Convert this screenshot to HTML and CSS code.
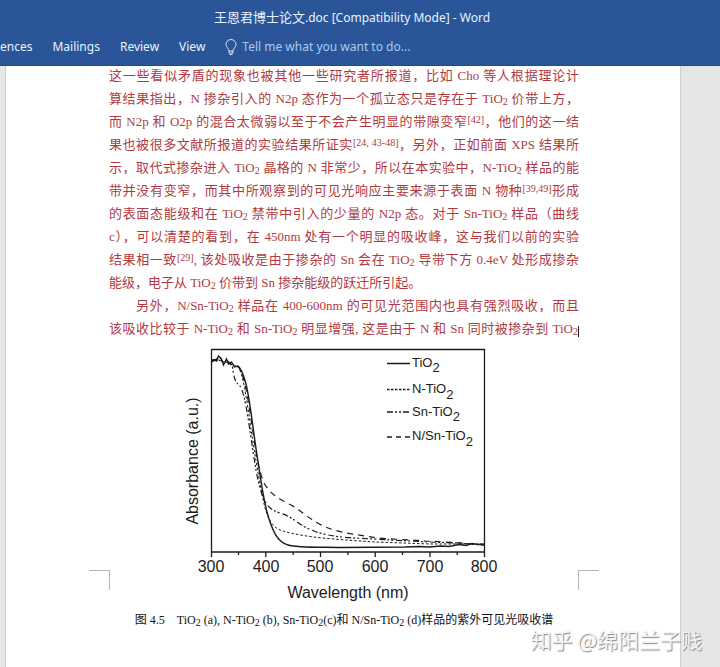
FILE: index.html
```html
<!DOCTYPE html>
<html lang="zh-CN">
<head>
<meta charset="utf-8">
<title>王恩君博士论文.doc [Compatibility Mode] - Word</title>
<link rel="stylesheet" href="styles.css">
</head>
<body>
<header class="ribbon">
  <div class="title"><span class="title-name">王恩君博士论文</span>.doc [Compatibility Mode] - Word</div>
  <nav class="tabs">
    <a class="tab" href="#references">ences</a>
    <a class="tab" href="#mailings">Mailings</a>
    <a class="tab" href="#review">Review</a>
    <a class="tab" href="#view">View</a>
    <button class="tell" type="button">
      <svg class="bulb" width="12" height="17" viewBox="0 0 12 17" fill="none" stroke="currentColor" aria-hidden="true"><path d="M4 12C4 9.500 1 8.500 1 5.500a5 5 0 0 1 10 0C11 8.500 8 9.500 8 12ZM4 12v2h4v-2M4.500 15.500h3"/></svg>
      <span>Tell me what you want to do...</span>
    </button>
  </nav>
</header>
<main class="workspace">
  <article class="page">
    <div class="body-text">
      <p class="line">这一些看似矛盾的现象也被其他一些研究者所报道，比如 Cho 等人根据理论计</p>
      <p class="line">算结果指出，N 掺杂引入的 N2p 态作为一个孤立态只是存在于 TiO<sub>2</sub> 价带上方，</p>
      <p class="line">而 N2p 和 O2p 的混合太微弱以至于不会产生明显的带隙变窄<sup>[42]</sup>，他们的这一结</p>
      <p class="line">果也被很多文献所报道的实验结果所证实<sup>[24, 43-48]</sup>，另外，正如前面 XPS 结果所</p>
      <p class="line">示，取代式掺杂进入 TiO<sub>2</sub> 晶格的 N 非常少，所以在本实验中，N-TiO<sub>2</sub> 样品的能</p>
      <p class="line">带并没有变窄，而其中所观察到的可见光响应主要来源于表面 N 物种<sup>[39,49]</sup>形成</p>
      <p class="line">的表面态能级和在 TiO<sub>2</sub> 禁带中引入的少量的 N2p 态。对于 Sn-TiO<sub>2</sub> 样品（曲线</p>
      <p class="line">c），可以清楚的看到，在 450nm 处有一个明显的吸收峰，这与我们以前的实验</p>
      <p class="line">结果相一致<sup>[29]</sup>, 该处吸收是由于掺杂的 Sn 会在 TiO<sub>2</sub> 导带下方 0.4eV 处形成掺杂</p>
      <p class="line line-end">能级，电子从 TiO<sub>2</sub> 价带到 Sn 掺杂能级的跃迁所引起。</p>
      <p class="line line-indent">另外，N/Sn-TiO<sub>2</sub> 样品在 400-600nm 的可见光范围内也具有强烈吸收，而且</p>
      <p class="line">该吸收比较于 N-TiO<sub>2</sub> 和 Sn-TiO<sub>2</sub> 明显增强, 这是由于 N 和 Sn 同时被掺杂到 TiO<sub class="caret">2</sub></p>
    </div>
    <figure class="figure">
      <div class="figure-row">
        <span class="corner corner-left"></span>
        <svg class="chart" width="320" height="264" viewBox="184 342 320 264" role="img" aria-label="Absorbance (a.u.) / Wavelength (nm)">
          <g fill="none" stroke="#1c1c1c">
            <path d="M211.500 349.500H484.500V552M211.500 349V557M211 552H485" stroke-width="1.300"/>
            <path d="M265.800 552v5M320.500 552v5M375.200 552v5M430 552v5M484.500 552v5M238.500 552v3M293.200 552v3M347.900 552v3M402.500 552v3M457.200 552v3" stroke-width="1.300"/>
            <path d="M211.500 361l3-1 2 1 2-5 3 3 2 6 3-6 2 5 3-2 3 5 3-1C240 367 243 373 246 384C250 400 253 430 257 455C260 475 263 497 267 512C272 530 277 542 288 545C298 548 323 547 340 547.500L405 547l14-.5 10 .5 12-1 8 .5 10-2 7 1 6-2 6 1 7-.5" stroke-width="1.400"/>
            <path d="M211.500 361l6-1 8 2 8 3 5 2C243 375 246 396 249 415C253 444 258 474 263 499C267 519 272 528 283 531C305 538 347 540 375 542L430 544 484 544" stroke-dasharray="2.500 2"/>
            <path d="M211.500 362l6-3 5 3 5-1 5 6C234 377 234 381 240 386C246 394 250 435 256 470C262 502 267 509 280 513C294 517 299 526 314 531C334 539 366 538 390 540L430 542 456 543 484 545" stroke-width="1.200" stroke-dasharray="6 2 2 2 2 3"/>
            <path d="M211.500 360l5-1 3-3 3 6 4-2 4 4 5 2 3 1C245 376 248 400 252 425C256 454 259 472 264 483C270 494 279 499 289 504C299 509 306 516 313 520C328 531 347 533 365 536C387 540 407 539 425 541C447 542 464 543 484 545" stroke-width="1.200" stroke-dasharray="6 5"/>
            <path d="M387 363.500h23" stroke-width="1.500"/>
            <path d="M387 389.500h23" stroke-width="1.300" stroke-dasharray="2.500 1.500"/>
            <path d="M387 412h23" stroke-width="1.300" stroke-dasharray="6 2 2 2 2 2"/>
            <path d="M387 437h23" stroke-width="1.300" stroke-dasharray="5 4"/>
          </g>
          <g class="legend">
            <text x="412" y="367">TiO<tspan dy="5">2</tspan></text>
            <text x="412" y="393">N-TiO<tspan dy="6">2</tspan></text>
            <text x="412" y="416">Sn-TiO<tspan dy="5">2</tspan></text>
            <text x="412" y="440">N/Sn-TiO<tspan dy="6">2</tspan></text>
          </g>
          <g class="axis">
            <text x="211" y="572">300</text>
            <text x="266" y="572">400</text>
            <text x="320" y="572">500</text>
            <text x="375" y="572">600</text>
            <text x="430" y="572">700</text>
            <text x="484" y="572">800</text>
            <text x="348" y="598">Wavelength (nm)</text>
            <text transform="translate(198 461) rotate(-90)">Absorbance (a.u.)</text>
          </g>
        </svg>
        <span class="corner corner-right"></span>
      </div>
      <figcaption class="caption">图 4.5&emsp;TiO<sub>2</sub> (a), N-TiO<sub>2</sub> (b), Sn-TiO<sub>2</sub>(c)和 N/Sn-TiO<sub>2</sub> (d)样品的紫外可见光吸收谱</figcaption>
    </figure>
  </article>
  <div class="watermark">知乎 @绵阳兰子贱</div>
</main>
</body>
</html>
```
FILE: styles.css
```css
* {
  box-sizing: border-box;
}

body {
  margin: 0;
  min-height: 100vh;
  display: flex;
  flex-direction: column;
  background: #e6e6e6;
}

.ribbon {
  padding: 8px 0 9px;
  background: #2a5699;
  border-bottom: 1px solid #234a84;
  color: #e8f2fc;
  font: 12px/18px "Noto Sans", "Noto Sans CJK SC", sans-serif;
}

.title {
  height: 18px;
  padding-right: 16px;
  text-align: center;
}

.title-name {
  font-size: 13px;
}

.tabs {
  display: flex;
  align-items: center;
  gap: 20px;
  margin-top: 12px;
}

.tab {
  color: inherit;
  text-decoration: none;
}

.tell {
  display: flex;
  align-items: center;
  gap: 5px;
  padding: 0;
  border: 0;
  background: none;
  color: #a9c8f0;
  font: inherit;
}

.bulb {
  color: #d3e4f8;
}

.workspace {
  position: relative;
  flex: 1;
  padding: 0 39px 0 5px;
  display: flex;
}

.page {
  flex: 1;
  padding: 0 101px 0 103px;
  background: #fff;
  border: solid #cfcfcf;
  border-width: 0 1px;
}

.body-text {
  margin: -2px 0 2px;
  color: #b03a42;
  font: 13px/23px "Liberation Serif", "Noto Sans CJK SC", serif;
}

.line {
  margin: 0;
  white-space: nowrap;
  text-align: justify;
  text-align-last: justify;
}

.line-indent {
  padding-left: 27px;
}

.line-end {
  text-align-last: left;
}

sub,
sup {
  font-size: 10px;
  line-height: 0;
}

sub {
  vertical-align: -2px;
}

sup {
  vertical-align: 3px;
}

.caret {
  border-right: 1px solid #222;
}

.figure {
  margin: 0 -20px;
}

.figure-row {
  display: flex;
  justify-content: space-between;
  align-items: flex-end;
}

.corner {
  width: 21px;
  height: 20px;
  margin-bottom: 16px;
  border-top: 1px solid #b5b5b5;
}

.corner-left {
  border-right: 1px solid #b5b5b5;
}

.corner-right {
  border-left: 1px solid #b5b5b5;
}

.chart {
  display: block;
  fill: #1c1c1c;
  font-family: "Liberation Sans", sans-serif;
}

.legend {
  font-size: 13px;
}

.axis {
  font-size: 16px;
  text-anchor: middle;
}

.caption {
  color: #111;
  font: 12px/28px "Liberation Serif", "Noto Sans CJK SC", serif;
  text-align: center;
}

.watermark {
  position: absolute;
  right: 18px;
  bottom: 14px;
  color: #f4f4f4;
  font: 21px/28px "Noto Sans CJK SC", sans-serif;
  text-shadow: 1px 1px 1px #888;
}
```
